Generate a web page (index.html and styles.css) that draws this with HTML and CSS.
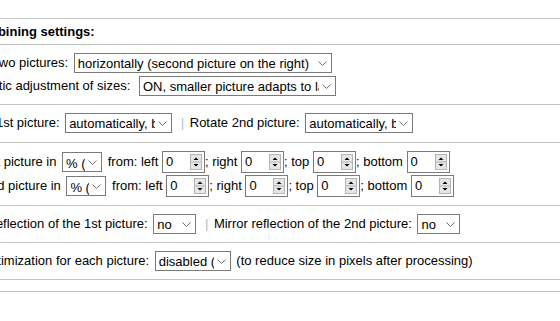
FILE: index.html
```html
<!DOCTYPE html>
<html lang="en">
<head>
    <meta charset="UTF-8">
    <meta name="viewport" content="width=device-width, initial-scale=1.0">
    <title>Combining settings</title>
    <link rel="stylesheet" href="styles.css">
</head>
<body>
    <form class="panel" id="combine-form">
        <div class="row head">Combining settings:</div>

        <div class="row pair">
            <div class="line">Gluing two pictures: <span class="pick"><select class="w258" name="layout"><option>horizontally (second picture on the right)</option><option>vertically (second picture at the bottom)</option></select><svg class="chev" width="9" height="5"><path d="M0.5 0.5L4.5 4.5L8.5 0.5"/></svg></span></div>
            <div class="line">Automatic adjustment of sizes: <span class="pick gap"><select class="w197" name="fit"><option>ON, smaller picture adapts to larger</option><option>OFF</option></select><svg class="chev" width="9" height="5"><path d="M0.5 0.5L4.5 4.5L8.5 0.5"/></svg></span></div>
        </div>

        <div class="row rotate">
            <div class="line">Rotate 1st picture: <span class="pick"><select class="w107" name="rot1"><option>automatically, by EXIF</option><option>no</option></select><svg class="chev" width="9" height="5"><path d="M0.5 0.5L4.5 4.5L8.5 0.5"/></svg></span> <span class="sep">|</span> Rotate 2nd picture: <span class="pick"><select class="w108" name="rot2"><option>automatically, by EXIF</option><option>no</option></select><svg class="chev" width="9" height="5"><path d="M0.5 0.5L4.5 4.5L8.5 0.5"/></svg></span></div>
        </div>

        <div class="row crops">
            <div class="line nums">Crop 1st picture in <span class="pick"><select class="w40" name="unit1"><option>% (percent)</option><option>px (pixels)</option></select><svg class="chev" width="9" height="5"><path d="M0.5 0.5L4.5 4.5L8.5 0.5"/></svg></span> from: left <span class="num"><input type="number" name="l1" value="0"><svg class="spin" width="12" height="16"><rect x="0.5" y="0.5" width="11" height="15"/><line x1="1" y1="8" x2="11" y2="8"/><path d="M3.5 6H8.5L6 3.5Z M3.5 10H8.5L6 12.5Z"/></svg></span>; right <span class="num"><input type="number" name="r1" value="0"><svg class="spin" width="12" height="16"><rect x="0.5" y="0.5" width="11" height="15"/><line x1="1" y1="8" x2="11" y2="8"/><path d="M3.5 6H8.5L6 3.5Z M3.5 10H8.5L6 12.5Z"/></svg></span>; top <span class="num"><input type="number" name="t1" value="0"><svg class="spin" width="12" height="16"><rect x="0.5" y="0.5" width="11" height="15"/><line x1="1" y1="8" x2="11" y2="8"/><path d="M3.5 6H8.5L6 3.5Z M3.5 10H8.5L6 12.5Z"/></svg></span>; bottom <span class="num"><input type="number" name="b1" value="0"><svg class="spin" width="12" height="16"><rect x="0.5" y="0.5" width="11" height="15"/><line x1="1" y1="8" x2="11" y2="8"/><path d="M3.5 6H8.5L6 3.5Z M3.5 10H8.5L6 12.5Z"/></svg></span></div>
            <div class="line nums">Crop 2nd picture in <span class="pick"><select class="w40" name="unit2"><option>% (percent)</option><option>px (pixels)</option></select><svg class="chev" width="9" height="5"><path d="M0.5 0.5L4.5 4.5L8.5 0.5"/></svg></span> from: left <span class="num"><input type="number" name="l2" value="0"><svg class="spin" width="12" height="16"><rect x="0.5" y="0.5" width="11" height="15"/><line x1="1" y1="8" x2="11" y2="8"/><path d="M3.5 6H8.5L6 3.5Z M3.5 10H8.5L6 12.5Z"/></svg></span>; right <span class="num"><input type="number" name="r2" value="0"><svg class="spin" width="12" height="16"><rect x="0.5" y="0.5" width="11" height="15"/><line x1="1" y1="8" x2="11" y2="8"/><path d="M3.5 6H8.5L6 3.5Z M3.5 10H8.5L6 12.5Z"/></svg></span>; top <span class="num"><input type="number" name="t2" value="0"><svg class="spin" width="12" height="16"><rect x="0.5" y="0.5" width="11" height="15"/><line x1="1" y1="8" x2="11" y2="8"/><path d="M3.5 6H8.5L6 3.5Z M3.5 10H8.5L6 12.5Z"/></svg></span>; bottom <span class="num"><input type="number" name="b2" value="0"><svg class="spin" width="12" height="16"><rect x="0.5" y="0.5" width="11" height="15"/><line x1="1" y1="8" x2="11" y2="8"/><path d="M3.5 6H8.5L6 3.5Z M3.5 10H8.5L6 12.5Z"/></svg></span></div>
        </div>

        <div class="row">
            <div class="line">Mirror reflection of the 1st picture: <span class="pick"><select class="w43" name="mir1"><option>no</option><option>yes</option></select><svg class="chev" width="9" height="5"><path d="M0.5 0.5L4.5 4.5L8.5 0.5"/></svg></span> <span class="sep">|</span> Mirror reflection of the 2nd picture: <span class="pick"><select class="w43" name="mir2"><option>no</option><option>yes</option></select><svg class="chev" width="9" height="5"><path d="M0.5 0.5L4.5 4.5L8.5 0.5"/></svg></span></div>
        </div>

        <div class="row">
            <div class="line">Size optimization for each picture: <span class="pick"><select class="w76" name="opt"><option>disabled (default)</option><option>enabled</option></select><svg class="chev" width="9" height="5"><path d="M0.5 0.5L4.5 4.5L8.5 0.5"/></svg></span> (to reduce size in pixels after processing)</div>
        </div>

        <div class="row empty"></div>
    </form>
</body>
</html>
```

FILE: styles.css
```css
body { margin: 0; font-family: "Liberation Sans", Arial, sans-serif; font-size: 13px; color: #000; background: #fff; overflow: hidden; }
.panel { margin: 0 0 0 -54px; padding-top: 18px; }
.row { display: flex; flex-direction: column; gap: 3px; padding: 8px 0 8px 8px; border-bottom: 1px solid #c4c4c4; }
.row.head { display: block; padding: 0 0 0 23px; height: 25px; line-height: 25px; font-weight: bold; border-top: 1px solid #c4c4c4; }
.row.rotate { padding-bottom: 9px; }
.row.crops { gap: 2px; padding-left: 5px; }
.row.empty { padding: 0; height: 11px; }
.line { height: 20px; line-height: 20px; white-space: nowrap; }
.line.nums { height: 22px; line-height: 22px; }

.pick { position: relative; display: inline-block; vertical-align: top; margin: 0 2px; }
.pick.gap { margin-left: 5px; }
.nums .pick { margin-top: 1px; }
.pick select { -webkit-appearance: none; appearance: none; display: block; box-sizing: border-box; height: 20px; margin: 0; padding: 0 16px 0 3px; border: 1px solid #7a7a7a; border-radius: 0; background: #fff; font: inherit; color: #000; outline: none; }
.chev { position: absolute; right: 5px; top: 8px; pointer-events: none; }
.chev path { fill: none; stroke: #707070; stroke-width: 1; }

.w258 { width: 258px; }
.w197 { width: 197px; }
.w107 { width: 107px; }
.w108 { width: 108px; }
.w40 { width: 40px; }
.w43 { width: 43px; }
.w76 { width: 76px; }

.sep { color: #a8bccd; margin: 0 2px 0 3px; }

.num { position: relative; display: inline-block; vertical-align: top; }
.num input { display: block; box-sizing: border-box; width: 43px; height: 22px; margin: 0; padding: 0 0 0 3px; border: 1px solid #7a7a7a; border-radius: 0; font: inherit; color: #000; background: #fff; -moz-appearance: textfield; }
.num input::-webkit-inner-spin-button,
.num input::-webkit-outer-spin-button { -webkit-appearance: none; margin: 0; }
.spin { position: absolute; right: 3px; top: 3px; pointer-events: none; }
.spin rect { fill: #e6e6e6; stroke: #b4b4b4; }
.spin line { stroke: #b4b4b4; }
.spin path { fill: #000; }
```
